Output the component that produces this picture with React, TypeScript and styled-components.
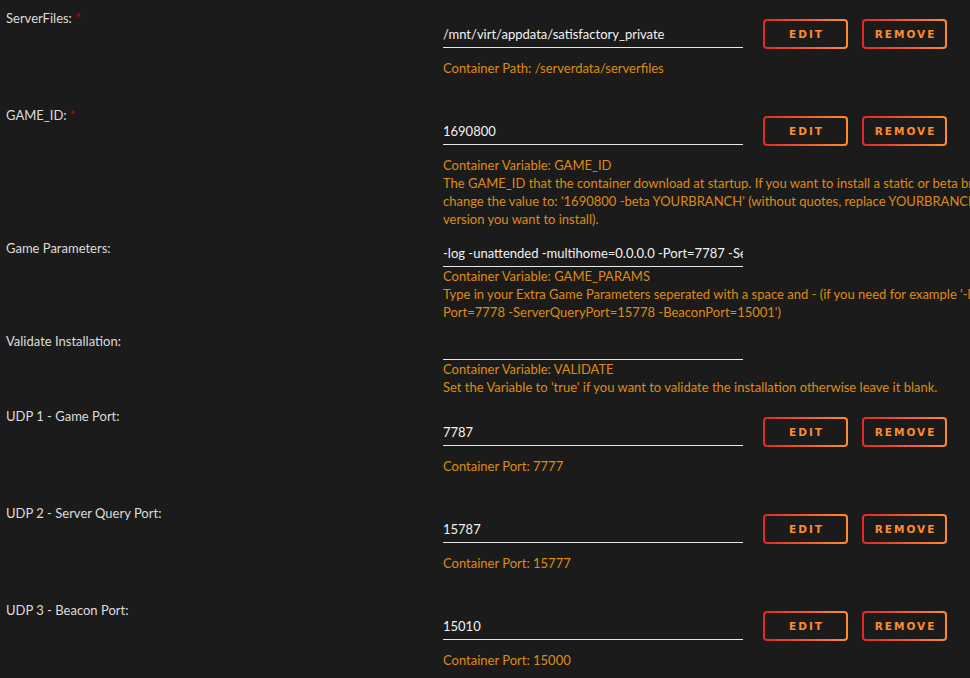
import React from "react";
import styled, { createGlobalStyle } from "styled-components";

type Field = {
  label: string;
  required?: boolean;
  value: string;
  target: string;
  note?: string;
  buttons?: boolean;
};

const FIELDS: Field[] = [
  {
    label: "ServerFiles:",
    required: true,
    value: "/mnt/virt/appdata/satisfactory_private",
    target: "Container Path: /serverdata/serverfiles",
    buttons: true,
  },
  {
    label: "GAME_ID:",
    required: true,
    value: "1690800",
    target: "Container Variable: GAME_ID",
    note:
      "The GAME_ID that the container download at startup. If you want to install a static or beta branch of the game server\n" +
      "change the value to: '1690800 -beta YOURBRANCH' (without quotes, replace YOURBRANCH with the branch or\n" +
      "version you want to install).",
    buttons: true,
  },
  {
    label: "Game Parameters:",
    value: "-log -unattended -multihome=0.0.0.0 -Port=7787 -ServerQueryPort=15787 -BeaconPort=15010",
    target: "Container Variable: GAME_PARAMS",
    note:
      "Type in your Extra Game Parameters seperated with a space and - (if you need for example '-log -unattended -multihome=0.0.0.0 -\n" +
      "Port=7778 -ServerQueryPort=15778 -BeaconPort=15001')",
  },
  {
    label: "Validate Installation:",
    value: "",
    target: "Container Variable: VALIDATE",
    note: "Set the Variable to 'true' if you want to validate the installation otherwise leave it blank.",
  },
  {
    label: "UDP 1 - Game Port:",
    value: "7787",
    target: "Container Port: 7777",
    buttons: true,
  },
  {
    label: "UDP 2 - Server Query Port:",
    value: "15787",
    target: "Container Port: 15777",
    buttons: true,
  },
  {
    label: "UDP 3 - Beacon Port:",
    value: "15010",
    target: "Container Port: 15000",
    buttons: true,
  },
];

const GlobalStyle = createGlobalStyle`
  html, body {
    margin: 0;
    background: #1c1b1b;
    overflow: hidden;
  }
  body {
    font-family: Lato, "Noto Sans", sans-serif;
    font-size: 13px;
    line-height: 18px;
    color: #dcdcdc;
  }
`;

export default function App() {
  return (
    <>
      <GlobalStyle />
      <Form>
        {FIELDS.map((field) => (
          <Row key={field.label}>
            <Label>
              {field.label}
              {field.required && <Required> *</Required>}
            </Label>
            <Content>
              <Line $withButtons={!!field.buttons}>
                <Input defaultValue={field.value} />
                {field.buttons && (
                  <>
                    <Button type="button">Edit</Button>
                    <Button type="button">Remove</Button>
                  </>
                )}
              </Line>
              <Description $gap={!!field.buttons}>
                <div>{field.target}</div>
                <Note>{field.note ?? ""}</Note>
              </Description>
            </Content>
          </Row>
        ))}
      </Form>
    </>
  );
}

const Form = styled.div`
  padding: 9px 0 0 6px;
  display: flex;
  flex-direction: column;
  gap: 11px;
`;

const Row = styled.div`
  display: flex;
  align-items: flex-start;
`;

const Label = styled.div`
  width: 437px;
  flex-shrink: 0;
  color: #dcdcdc;
`;

const Required = styled.span`
  color: #cc0000;
`;

const Content = styled.div`
  display: flex;
  flex-direction: column;
`;

const Line = styled.div<{ $withButtons: boolean }>`
  display: flex;
  align-items: center;
  margin-top: ${(p) => (p.$withButtons ? "10px" : "0")};
  height: ${(p) => (p.$withButtons ? "30px" : "28px")};
`;

const Input = styled.input`
  width: 300px;
  height: 28px;
  box-sizing: border-box;
  padding: 0;
  margin: 0 6px 0 0;
  background: transparent;
  border: none;
  border-bottom: 1px solid #e6e6e6;
  color: #f2f2f2;
  font-family: inherit;
  font-size: 13px;
  outline: none;
`;

const Button = styled.button`
  width: 85px;
  height: 30px;
  box-sizing: border-box;
  margin-left: 14px;
  padding: 0;
  border: 2px solid transparent;
  border-radius: 4px;
  background:
    linear-gradient(#1c1b1b, #1c1b1b) padding-box,
    linear-gradient(90deg, #e22828, #ff8c2f) border-box;
  color: #ff8c2f;
  font-family: "DejaVu Sans", sans-serif;
  font-size: 10.5px;
  font-weight: bold;
  letter-spacing: 2px;
  text-transform: uppercase;
  text-indent: 2px;
`;

const Description = styled.div<{ $gap: boolean }>`
  margin-top: ${(p) => (p.$gap ? "10px" : "0")};
  color: #de8b14;
  white-space: pre;
`;

const Note = styled.div`
  min-height: 18px;
`;
